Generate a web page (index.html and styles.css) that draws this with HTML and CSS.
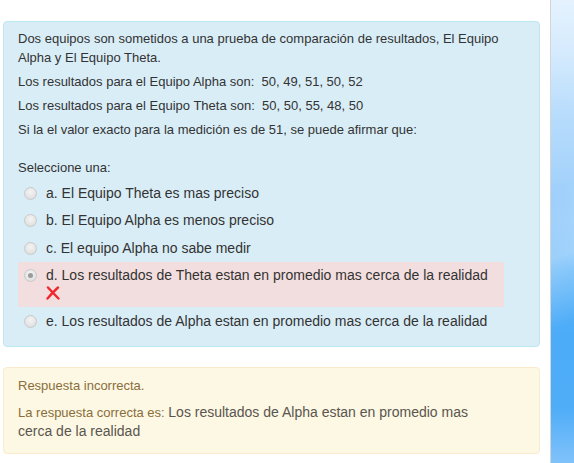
FILE: index.html
```html
<!DOCTYPE html>
<html lang="es">
<head>
<meta charset="utf-8">
<title>Pregunta</title>
<link rel="stylesheet" href="styles.css">
</head>
<body>
<div class="page">
  <div class="main">
    <div class="formulation">
      <div class="qtext">
        <p>Dos equipos son sometidos a una prueba de comparación de resultados, El Equipo Alpha y El Equipo Theta.</p>
        <p>Los resultados para el Equipo Alpha son:&nbsp; 50, 49, 51, 50, 52</p>
        <p>Los resultados para el Equipo Theta son:&nbsp; 50, 50, 55, 48, 50</p>
        <p>Si la el valor exacto para la medición es de 51, se puede afirmar que:</p>
      </div>
      <div class="prompt">Seleccione una:</div>
      <div class="answer">
        <div class="opt"><span class="radio"></span><span class="label">a. El Equipo Theta es mas preciso</span></div>
        <div class="opt"><span class="radio"></span><span class="label">b. El Equipo Alpha es menos preciso</span></div>
        <div class="opt"><span class="radio"></span><span class="label">c. El equipo Alpha no sabe medir</span></div>
        <div class="opt incorrect"><span class="radio checked"></span><span class="label">d. Los resultados de Theta estan en promedio mas cerca de la realidad <svg class="xicon" width="14" height="14" viewBox="0 0 14 14"><path d="M2 1.5 Q7 7 12.5 12.5 M12 1.5 Q7 6 1.5 12.5" stroke="#f0282d" stroke-width="2.4" fill="none" stroke-linecap="round"/></svg></span></div>
        <div class="opt"><span class="radio"></span><span class="label">e. Los resultados de Alpha estan en promedio mas cerca de la realidad</span></div>
      </div>
    </div>
    <div class="outcome">
      <p class="feedback">Respuesta incorrecta.</p>
      <p class="right">La respuesta correcta es: <span class="ans">Los resultados de Alpha estan en promedio mas cerca de la realidad</span></p>
    </div>
  </div>
  <div class="strip"></div>
</div>
</body>
</html>
```
FILE: styles.css
```css
html, body {
  margin: 0;
  padding: 0;
  background: #ffffff;
}
body {
  font-family: "Liberation Sans", Arial, sans-serif;
  font-size: 13px;
  line-height: 19px;
  color: #333333;
}
.page {
  display: flex;
  width: 574px;
  height: 463px;
  overflow: hidden;
}
.main {
  width: 537px;
  margin-left: 3px;
  padding-top: 21px;
  box-sizing: border-box;
}
.formulation {
  background: #d9edf7;
  border: 1px solid #bce8f1;
  border-radius: 4px;
  padding: 7px 35px 9px 14px;
}
.qtext p {
  margin: 0 0 5px;
}
.prompt {
  margin-top: 19px;
  margin-bottom: 2px;
}
.answer {
  font-size: 14px;
  line-height: 18px;
  margin-bottom: 2px;
}
.opt {
  display: flex;
  align-items: flex-start;
  padding: 4.75px 5px;
}
.opt.incorrect {
  background: #f2dede;
}
.radio {
  flex: none;
  width: 11px;
  height: 11px;
  border: 1px solid #c9c9c9;
  border-radius: 50%;
  background: radial-gradient(circle at 50% 35%, #f4f4f4 0%, #e2e2e2 70%, #d6d6d6 100%);
  margin: 3px 9px 0 1px;
  position: relative;
}
.radio.checked::after {
  content: "";
  position: absolute;
  left: 3px;
  top: 3px;
  width: 5px;
  height: 5px;
  border-radius: 50%;
  background: #9a9a9a;
}
.label {
  display: block;
}
.xicon {
  display: inline-block;
  vertical-align: -2px;
}
.outcome {
  margin-top: 20px;
  background: #fcf8e3;
  border: 1px solid #faebcc;
  border-radius: 4px;
  padding: 8px 35px 12px 14px;
  color: #8a6d3b;
}
.outcome p {
  margin: 0;
}
.outcome .feedback {
  margin-bottom: 8px;
}
.outcome .right {
  line-height: 18px;
}
.outcome .ans {
  font-size: 14px;
  color: #5a5550;
}
.strip {
  margin-left: auto;
  width: 23px;
  flex: none;
  border-left: 1px solid #d5d5d5;
  background:
    linear-gradient(160deg, rgba(255,255,255,0.0) 40%, rgba(255,255,255,0.35) 55%, rgba(255,255,255,0) 70%),
    linear-gradient(180deg, #e4f2fe 0%, #d4eafd 12%, #b7dcfc 25%, #a6d3fb 38%, #8dc8fb 48%, #5cb3f9 58%, #4dacf8 72%, #4fadf8 88%, #80c2fa 100%);
}
```
